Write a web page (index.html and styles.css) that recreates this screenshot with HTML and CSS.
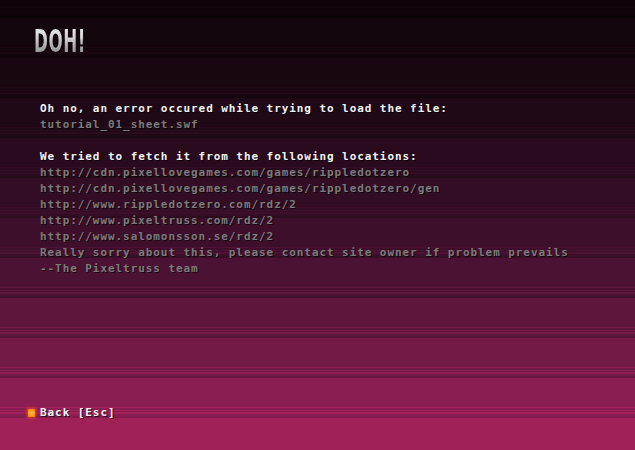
FILE: index.html
```html
<!DOCTYPE html>
<html lang="en">
<head>
<meta charset="utf-8">
<title>DOH!</title>
<link rel="stylesheet" href="styles.css">
</head>
<body>
<div class="screen">
  <header class="title-wrap">
    <h1 class="title">DOH!</h1>
  </header>
  <main class="message">
    <section class="group">
      <p class="line strong">Oh no, an error occured while trying to load the file:</p>
      <p class="line dim">tutorial_01_sheet.swf</p>
    </section>
    <section class="group">
      <p class="line strong">We tried to fetch it from the following locations:</p>
      <p class="line dim">http://cdn.pixellovegames.com/games/rippledotzero</p>
      <p class="line dim">http://cdn.pixellovegames.com/games/rippledotzero/gen</p>
      <p class="line dim">http://www.rippledotzero.com/rdz/2</p>
      <p class="line dim">http://www.pixeltruss.com/rdz/2</p>
      <p class="line dim">http://www.salomonsson.se/rdz/2</p>
      <p class="line dim">Really sorry about this, please contact site owner if problem prevails</p>
      <p class="line dim">--The Pixeltruss team</p>
    </section>
  </main>
  <footer class="menu">
    <span class="bullet"></span>
    <span class="menu-label">Back [Esc]</span>
  </footer>
</div>
</body>
</html>
```

FILE: styles.css
```css
html, body {
  margin: 0;
  padding: 0;
  width: 635px;
  height: 450px;
  overflow: hidden;
}

body {
  background: linear-gradient(to bottom,
    #0e0409 0 7px, #12050c 7px 8px, #0e0409 8px 10px, #12050c 10px 11px, #0e0409 11px 12px, #12050c 12px 14px, #0e0409 14px 16px, #0c0307 16px 18px,
    #12050c 18px 47px, #180710 47px 48px, #12050c 48px 50px, #180710 50px 51px, #12050c 51px 52px, #180710 52px 54px, #12050c 54px 56px, #10040a 56px 58px,
    #180710 58px 87px, #200916 87px 88px, #180710 88px 90px, #200916 90px 91px, #180710 91px 92px, #200916 92px 94px, #180710 94px 96px, #15060e 96px 98px,
    #200916 98px 127px, #290b1d 127px 128px, #200916 128px 130px, #290b1d 130px 131px, #200916 131px 132px, #290b1d 132px 134px, #200916 134px 136px, #1c0814 136px 138px,
    #290b1d 138px 167px, #320d23 167px 168px, #290b1d 168px 170px, #320d23 170px 171px, #290b1d 171px 172px, #320d23 172px 174px, #290b1d 174px 176px, #250a1a 176px 178px,
    #320d23 178px 207px, #3d0f2a 207px 208px, #320d23 208px 210px, #3d0f2a 210px 211px, #320d23 211px 212px, #3d0f2a 212px 214px, #320d23 214px 216px, #2d0c20 216px 218px,
    #3d0f2a 218px 247px, #4b1233 247px 248px, #3d0f2a 248px 250px, #4b1233 250px 251px, #3d0f2a 251px 252px, #4b1233 252px 254px, #3d0f2a 254px 256px, #370e27 256px 258px,
    #4b1233 258px 287px, #5e163d 287px 288px, #4b1233 288px 290px, #5e163d 290px 291px, #4b1233 291px 292px, #5e163d 292px 294px, #4b1233 294px 296px, #44102f 296px 298px,
    #5e163d 298px 327px, #731a47 327px 328px, #5e163d 328px 330px, #731a47 330px 331px, #5e163d 331px 332px, #731a47 332px 334px, #5e163d 334px 336px, #561438 336px 338px,
    #731a47 338px 367px, #8a1d51 367px 368px, #731a47 368px 370px, #8a1d51 370px 371px, #731a47 371px 372px, #8a1d51 372px 374px, #731a47 374px 376px, #6a1842 376px 378px,
    #8a1d51 378px 407px, #a02058 407px 408px, #8a1d51 408px 410px, #a02058 410px 411px, #8a1d51 411px 412px, #a02058 412px 414px, #8a1d51 414px 416px, #801b4c 416px 418px,
    #a02058 418px 450px);
  font-family: "DejaVu Sans Mono", "Liberation Mono", monospace;
}

.screen {
  height: 450px;
  display: flex;
  flex-direction: column;
}

.title-wrap {
  padding: 25px 0 0 34px;
}

.title {
  margin: 0;
  display: inline-block;
  font-family: "DejaVu Sans Condensed", "DejaVu Sans", sans-serif;
  font-weight: bold;
  font-size: 32px;
  line-height: 32px;
  letter-spacing: 1px;
  transform: scaleX(0.58);
  transform-origin: left center;
  background: linear-gradient(to bottom, #f0f0f0 0%, #d6d6d6 35%, #a8a8a8 70%, #8c8c8c 100%);
  -webkit-background-clip: text;
  background-clip: text;
  color: transparent;
  filter: drop-shadow(1px 1px 0 #1a0a10);
}

.message {
  padding: 44px 0 0 40px;
  display: flex;
  flex-direction: column;
  gap: 16px;
}

.group {
  display: flex;
  flex-direction: column;
}

.line {
  margin: 0;
  font-size: 11px;
  line-height: 16px;
  font-weight: bold;
  letter-spacing: 0.93px;
  white-space: nowrap;
  text-shadow: 1px 1px 0 rgba(0, 0, 0, 0.55);
}

.strong {
  color: #f2f2f2;
}

.dim {
  color: #7c7a7a;
}

.menu {
  margin-top: auto;
  padding: 0 0 29px 28px;
  display: flex;
  align-items: center;
  gap: 5px;
}

.bullet {
  width: 7px;
  height: 8px;
  background: radial-gradient(circle at 50% 50%, #ffc040 0%, #ff9a1c 55%, #f06a10 100%);
  box-shadow: 0 0 3px 1px rgba(255, 90, 30, 0.7);
}

.menu-label {
  font-size: 11px;
  line-height: 16px;
  font-weight: bold;
  letter-spacing: 0.93px;
  color: #f4f4f4;
  text-shadow: 1px 1px 0 rgba(0, 0, 0, 0.6);
  white-space: nowrap;
}
```
